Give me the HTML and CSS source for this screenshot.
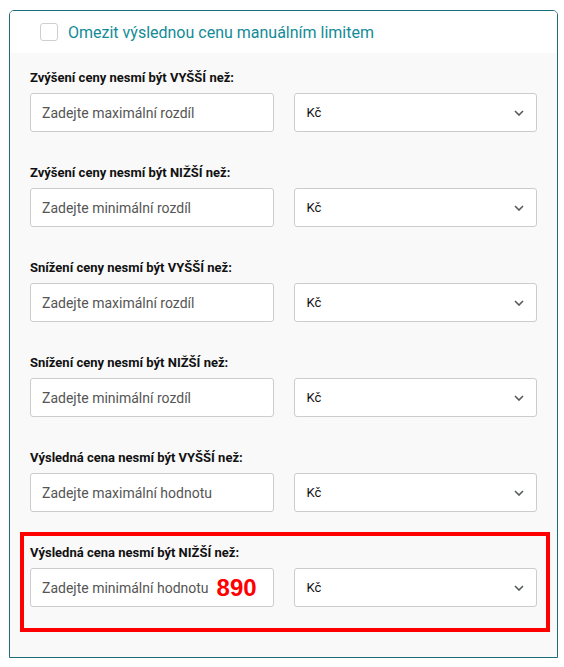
FILE: index.html
```html
<!DOCTYPE html>
<html lang="cs">
<head>
	<title>Manuální limit</title>
	<meta charset="utf-8">
	<meta name="viewport" content="width=device-width, initial-scale=1">
	<link rel="stylesheet" href="styles.css">
</head>
<body>
	<div class="card">
		<label class="card-header">
			<span class="checkbox"></span>
			<span class="header-text">Omezit výslednou cenu manuálním limitem</span>
		</label>

		<div class="card-body">
			<div class="field">
				<div class="field-label">Zvýšení ceny nesmí být VYŠŠÍ než:</div>
				<div class="field-row">
					<div class="text-input">Zadejte maximální rozdíl</div>
					<div class="select">Kč <svg class="chevron" width="10" height="6" viewBox="0 0 10 6"><path d="M1 1l4 4 4-4" fill="none" stroke="#55595c" stroke-width="1.6"/></svg></div>
				</div>
			</div>

			<div class="field">
				<div class="field-label">Zvýšení ceny nesmí být NIŽŠÍ než:</div>
				<div class="field-row">
					<div class="text-input">Zadejte minimální rozdíl</div>
					<div class="select">Kč <svg class="chevron" width="10" height="6" viewBox="0 0 10 6"><path d="M1 1l4 4 4-4" fill="none" stroke="#55595c" stroke-width="1.6"/></svg></div>
				</div>
			</div>

			<div class="field">
				<div class="field-label">Snížení ceny nesmí být VYŠŠÍ než:</div>
				<div class="field-row">
					<div class="text-input">Zadejte maximální rozdíl</div>
					<div class="select">Kč <svg class="chevron" width="10" height="6" viewBox="0 0 10 6"><path d="M1 1l4 4 4-4" fill="none" stroke="#55595c" stroke-width="1.6"/></svg></div>
				</div>
			</div>

			<div class="field">
				<div class="field-label">Snížení ceny nesmí být NIŽŠÍ než:</div>
				<div class="field-row">
					<div class="text-input">Zadejte minimální rozdíl</div>
					<div class="select">Kč <svg class="chevron" width="10" height="6" viewBox="0 0 10 6"><path d="M1 1l4 4 4-4" fill="none" stroke="#55595c" stroke-width="1.6"/></svg></div>
				</div>
			</div>

			<div class="field">
				<div class="field-label">Výsledná cena nesmí být VYŠŠÍ než:</div>
				<div class="field-row">
					<div class="text-input">Zadejte maximální hodnotu</div>
					<div class="select">Kč <svg class="chevron" width="10" height="6" viewBox="0 0 10 6"><path d="M1 1l4 4 4-4" fill="none" stroke="#55595c" stroke-width="1.6"/></svg></div>
				</div>
			</div>

			<div class="field highlighted">
				<div class="field-label">Výsledná cena nesmí být NIŽŠÍ než:</div>
				<div class="field-row">
					<div class="text-input">Zadejte minimální hodnotu <span class="note">890</span></div>
					<div class="select">Kč <svg class="chevron" width="10" height="6" viewBox="0 0 10 6"><path d="M1 1l4 4 4-4" fill="none" stroke="#55595c" stroke-width="1.6"/></svg></div>
				</div>
			</div>
		</div>
	</div>
</body>
</html>
```

FILE: styles.css
```css
body {
	margin: 0;
	padding: 10px 6px 0 9px;
	background-color: #ffffff;
	font-family: Roboto, "Noto Sans", sans-serif;
	color: #222222;
}

.card {
	width: 547px;
	border: 1px solid #1b6e7a;
	border-radius: 5px 5px 0 0;
	overflow: hidden;
}

.card-header {
	display: flex;
	align-items: center;
	height: 42px;
	padding-left: 30px;
	background-color: #ffffff;
}

.checkbox {
	width: 16px;
	height: 16px;
	border: 1px solid #cfcfcf;
	border-radius: 3px;
	background-color: #ffffff;
	margin-right: 10px;
}

.header-text {
	font-size: 16px;
	color: #138b96;
}

.card-body {
	background-color: #f9f9f9;
	padding: 8px 11px 29px 14px;
	display: flex;
	flex-direction: column;
	gap: 3px;
}

.field {
	padding: 8px 9px 21px 6px;
}

.field-label {
	font-size: 13px;
	font-weight: bold;
	line-height: 18px;
	margin-bottom: 6px;
	color: #111111;
}

.field-row {
	display: grid;
	grid-template-columns: 1fr 1fr;
	gap: 20px;
}

.text-input, .select {
	min-width: 0;
	box-sizing: border-box;
	height: 39px;
	border: 1px solid #cccccc;
	border-radius: 3px;
	background-color: #ffffff;
	display: flex;
	align-items: center;
}

.text-input {
	padding-left: 11px;
	font-size: 14px;
	color: #555555;
	white-space: nowrap;
}

.select {
	padding: 0 12px;
	font-size: 13px;
	color: #111111;
	justify-content: space-between;
}

.highlighted {
	outline: 4px solid #ff0000;
}

.note {
	font-family: "Liberation Sans", Arial, sans-serif;
	font-weight: bold;
	font-size: 24px;
	color: #ff0000;
	margin-left: 8px;
}
```
